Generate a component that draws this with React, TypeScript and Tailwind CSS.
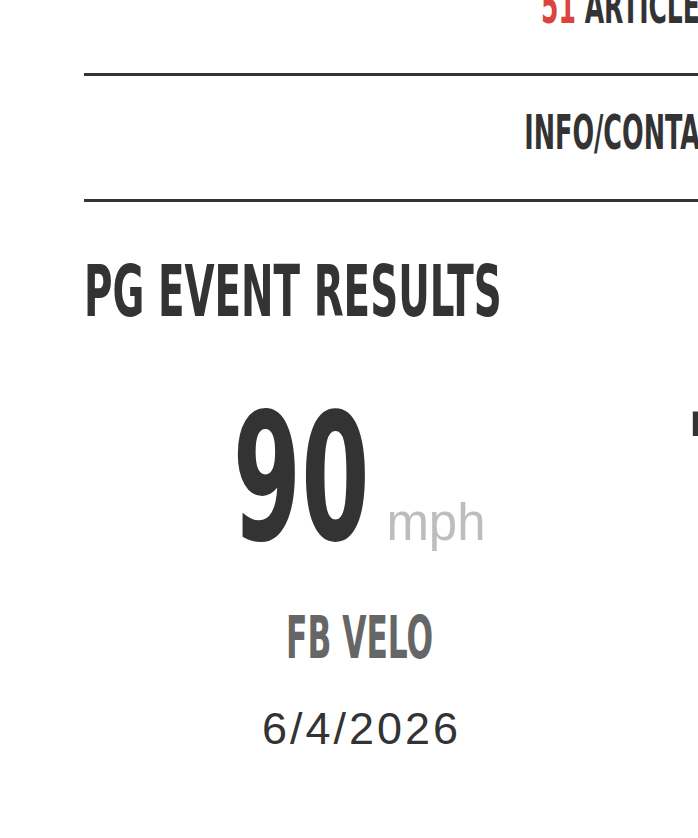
const condensed =
  "inline-block whitespace-nowrap font-['DejaVu_Sans_Condensed','DejaVu_Sans',sans-serif] font-bold leading-none";
const plain = "font-['Liberation_Sans',Arial,sans-serif]";

const results = [
  {
    value: '90',
    unit: 'mph',
    label: 'FB VELO',
    date: '6/4/2026',
    valueBox: 'w-[134px]',
  },
  {
    value: '7.05',
    unit: 'sec',
    label: '60 YD DASH',
    date: '6/4/2026',
    valueBox: 'w-[250px]',
  },
];

function NavRow({ children, className = '' }: { children: React.ReactNode; className?: string }) {
  return (
    <div
      className={`flex h-[126px] items-center justify-end border-b-[3px] border-[#333] pb-[12px] ${className}`}
    >
      {children}
    </div>
  );
}

function ResultCard({ result }: { result: (typeof results)[number] }) {
  return (
    <div className="flex flex-col items-center">
      <div className="flex items-baseline">
        <div className={`flex justify-center ${result.valueBox}`}>
          <span className={`${condensed} origin-center scale-x-[0.62] text-[176px] text-[#333]`}>
            {result.value}
          </span>
        </div>
        <span className={`${plain} ml-[18px] text-[51px] leading-none text-[#bdbdbd]`}>
          {result.unit}
        </span>
      </div>
      <span
        className={`${condensed} mt-[41px] origin-center scale-x-[0.6] text-[58px] text-[#666]`}
      >
        {result.label}
      </span>
      <span
        className={`${plain} mt-[39px] pl-[3px] text-[45px] leading-none tracking-[3px] text-[#333]`}
      >
        {result.date}
      </span>
    </div>
  );
}

export default function App() {
  return (
    <div className="h-[838px] w-[698px] overflow-hidden bg-white text-[#333]">
      <div className="ml-[84px] w-[652px]">
        <nav>
          <NavRow className="-mt-[50px] pr-[18px]">
            <span className={`${condensed} origin-right scale-x-[0.58] text-[48px]`}>
              <span className="text-[#d9443c]">51</span> ARTICLES
            </span>
          </NavRow>
          <NavRow>
            <span className={`${condensed} origin-right scale-x-[0.59] text-[48px]`}>
              INFO/CONTACT
            </span>
          </NavRow>
        </nav>

        <h2 className={`${condensed} mt-[53px] origin-left scale-x-[0.6] text-[72px]`}>
          PG EVENT RESULTS
        </h2>

        <div className="mt-[65px] grid grid-cols-[400px_400px] gap-x-[96px] pl-[76px]">
          {results.map((result) => (
            <ResultCard key={result.label} result={result} />
          ))}
        </div>
      </div>
    </div>
  );
}
